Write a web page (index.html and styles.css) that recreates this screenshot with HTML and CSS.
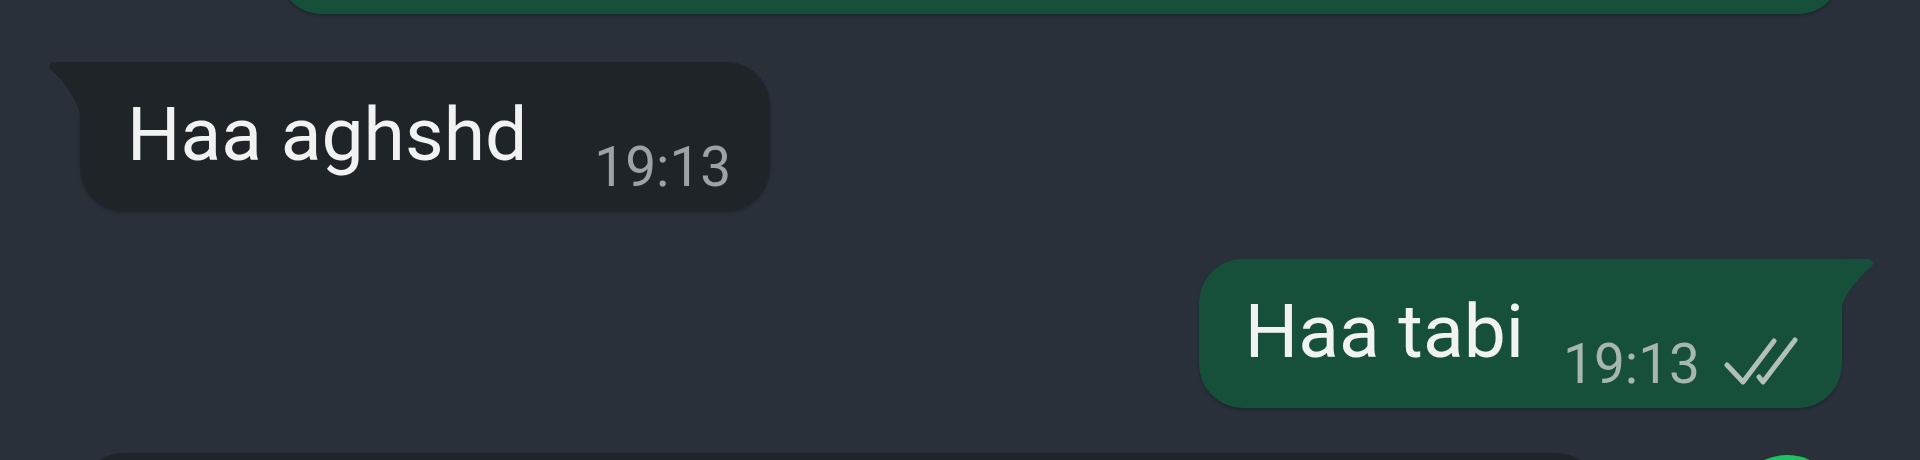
FILE: index.html
```html
<!DOCTYPE html>
<html lang="en">
<head>
  <meta charset="UTF-8"/>
  <meta name="viewport" content="width=device-width, initial-scale=1.0"/>
  <title>Chat</title>
  <link rel="stylesheet" href="styles.css">
</head>
<body>
  <div class="chat">
    <!-- previous message, scrolled mostly out of view -->
    <div class="row row-out row-first">
      <div class="bubble bubble-out bubble-long"></div>
    </div>

    <div class="row row-in">
      <div class="bubble bubble-in has-tail">
        <span class="text">Haa aghshd</span>
        <span class="meta meta-in"><span class="time">19:13</span></span>
      </div>
    </div>

    <div class="row row-out">
      <div class="bubble bubble-out has-tail">
        <span class="text">Haa tabi</span>
        <span class="meta meta-out">
          <span class="time">19:13</span>
          <svg class="ticks" width="74" height="48" viewBox="0 0 74 48">
            <path d="M3 28 L19 45 L50 4" fill="none" stroke="currentColor" stroke-width="5" stroke-linecap="round" stroke-linejoin="round"/>
            <path d="M35 40 L39 45 L71 3" fill="none" stroke="currentColor" stroke-width="5" stroke-linecap="round" stroke-linejoin="round"/>
          </svg>
        </span>
      </div>
    </div>

    <div class="row row-last">
      <div class="bubble bubble-in bubble-next"></div>
      <div class="fab"></div>
    </div>
  </div>
</body>
</html>
```

FILE: styles.css
```css
body { margin: 0; background: #29303a; font-family: Roboto, "Noto Sans", sans-serif; color: #f1f2f2; height: 460px; overflow: hidden; }
.chat { display: flex; flex-direction: column; height: 460px; overflow: hidden; padding: 0 78px 0 80px; }
.row { display: flex; flex-shrink: 0; }
.row-in { justify-content: flex-start; margin-top: 48px; }
.row-out { justify-content: flex-end; margin-top: 48px; }
.row-first { margin-top: -86px; }
.row-last { justify-content: space-between; align-items: flex-start; margin-top: 45px; }

.bubble { position: relative; display: flex; align-items: flex-start; padding: 28px 0 12px 47px; border-radius: 44px; box-shadow: 0 2px 3px rgba(0, 0, 0, 0.22); }
.bubble-in { background: #1f2428; border-top-left-radius: 0; }
.bubble-out { background: #17503a; border-top-right-radius: 0; padding-left: 46px; }
.bubble-long { width: 1564px; height: 100px; padding: 0; border-radius: 44px; box-sizing: border-box; }
.bubble-next { width: 1520px; height: 100px; padding: 0; border-radius: 44px; }

/* little corner tails */
.has-tail::before { content: ""; position: absolute; top: 0; width: 34px; height: 58px; }
.bubble-in.has-tail::before { left: -32px; background: #1f2428; clip-path: path('M5 0 H34 V58 C30 42 20 22 3 8 Q-2 3 5 0 Z'); }
.bubble-out.has-tail::before { right: -32px; background: #17503a; clip-path: path('M29 0 H0 V52 C4 38 14 22 31 8 Q36 3 29 0 Z'); }

.text { font-size: 75px; line-height: 88px; white-space: nowrap; }
.meta { display: flex; align-items: center; margin-top: 45px; line-height: 64px; }
.meta-in { margin-left: 67px; padding-right: 39px; color: #9ea2a5; }
.meta-out { margin-left: 39px; padding-right: 44px; color: #a7b7ae; }
.time { font-size: 55px; }
.ticks { margin-left: 24px; margin-top: -6px; color: #b2c1b8; }

.fab { width: 110px; height: 110px; border-radius: 50%; background: #21c063; margin-top: 2px; }
```
